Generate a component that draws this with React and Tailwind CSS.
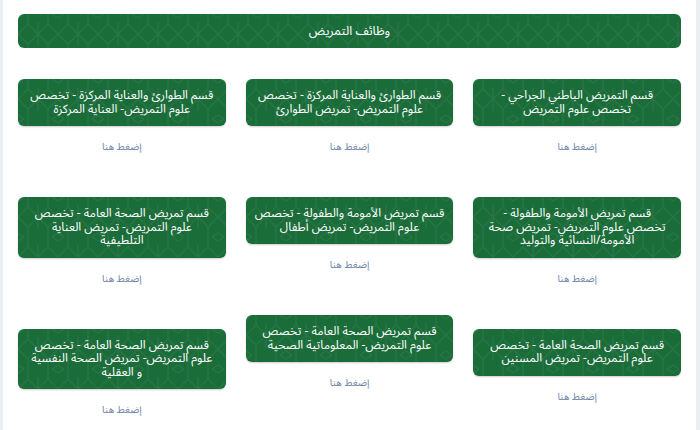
const columns = [
  [
    ["قسم التمريض الباطني الجراحي -", "تخصص علوم التمريض"],
    ["قسم تمريض الأمومة والطفولة -", "تخصص علوم التمريض- تمريض صحة", "الأمومة/النسائية والتوليد"],
    ["قسم تمريض الصحة العامة - تخصص", "علوم التمريض- تمريض المسنين"],
  ],
  [
    ["قسم الطوارئ والعناية المركزة - تخصص", "علوم التمريض- تمريض الطوارئ"],
    ["قسم تمريض الأمومة والطفولة - تخصص", "علوم التمريض- تمريض أطفال"],
    ["قسم تمريض الصحة العامة - تخصص", "علوم التمريض- المعلوماتية الصحية"],
  ],
  [
    ["قسم الطوارئ والعناية المركزة - تخصص", "علوم التمريض- العناية المركزة"],
    ["قسم تمريض الصحة العامة - تخصص", "علوم التمريض- تمريض العناية", "التلطيفية"],
    ["قسم تمريض الصحة العامة - تخصص", "علوم التمريض- تمريض الصحة النفسية", "و العقلية"],
  ],
];

function Pattern() {
  return (
    <svg className="absolute inset-0 h-full w-full pointer-events-none" aria-hidden="true">
      <defs>
        <pattern id="geo" width="40" height="40" patternUnits="userSpaceOnUse">
          <path
            d="M0 20 L10 10 L20 20 L30 10 L40 20 M0 20 L10 30 L20 20 L30 30 L40 20 M10 10 L10 0 M30 10 L30 0 M10 30 L10 40 M30 30 L30 40 M20 20 L20 8 M20 20 L20 32 M0 4 L6 0 M34 0 L40 4 M0 36 L6 40 M34 40 L40 36"
            fill="none"
            stroke="#ffffff"
            strokeOpacity="0.06"
            strokeWidth="1.4"
          />
        </pattern>
      </defs>
      <rect width="100%" height="100%" fill="url(#geo)" />
    </svg>
  );
}

function Card({ lines }) {
  return (
    <div className="flex flex-col items-center">
      <div className="relative w-full overflow-hidden rounded-md bg-[#1a6c39] px-2 py-[10px] text-center text-[12px] leading-[13.5px] text-white shadow-[0_1px_2px_rgba(0,0,0,0.2)]">
        <Pattern />
        <div className="relative">
          {lines.map((l, i) => (
            <div key={i} className="whitespace-nowrap">{l}</div>
          ))}
        </div>
      </div>
      <a className="mt-[14px] mb-[43px] text-[10px] leading-[14px] text-[#6d84a6]">إضغط هنا</a>
    </div>
  );
}

export default function App() {
  return (
    <main
      dir="rtl"
      className="h-[430px] overflow-hidden border-l-[3px] border-r-[4px] border-[#eceff1] bg-white px-[15px] pt-[14px] font-['Noto_Sans_Arabic','DejaVu_Sans',sans-serif]"
    >
      <div className="relative flex h-[34px] items-center justify-center overflow-hidden rounded-md bg-[#1a6c39] text-[12.5px] text-white">
        <Pattern />
        <span className="relative">وظائف التمريض</span>
      </div>
      <div className="mt-[31px] grid grid-cols-3 gap-5">
        {columns.map((col, ci) => (
          <div key={ci} className="flex flex-col">
            {col.map((lines, i) => (
              <Card key={i} lines={lines} />
            ))}
          </div>
        ))}
      </div>
    </main>
  );
}
